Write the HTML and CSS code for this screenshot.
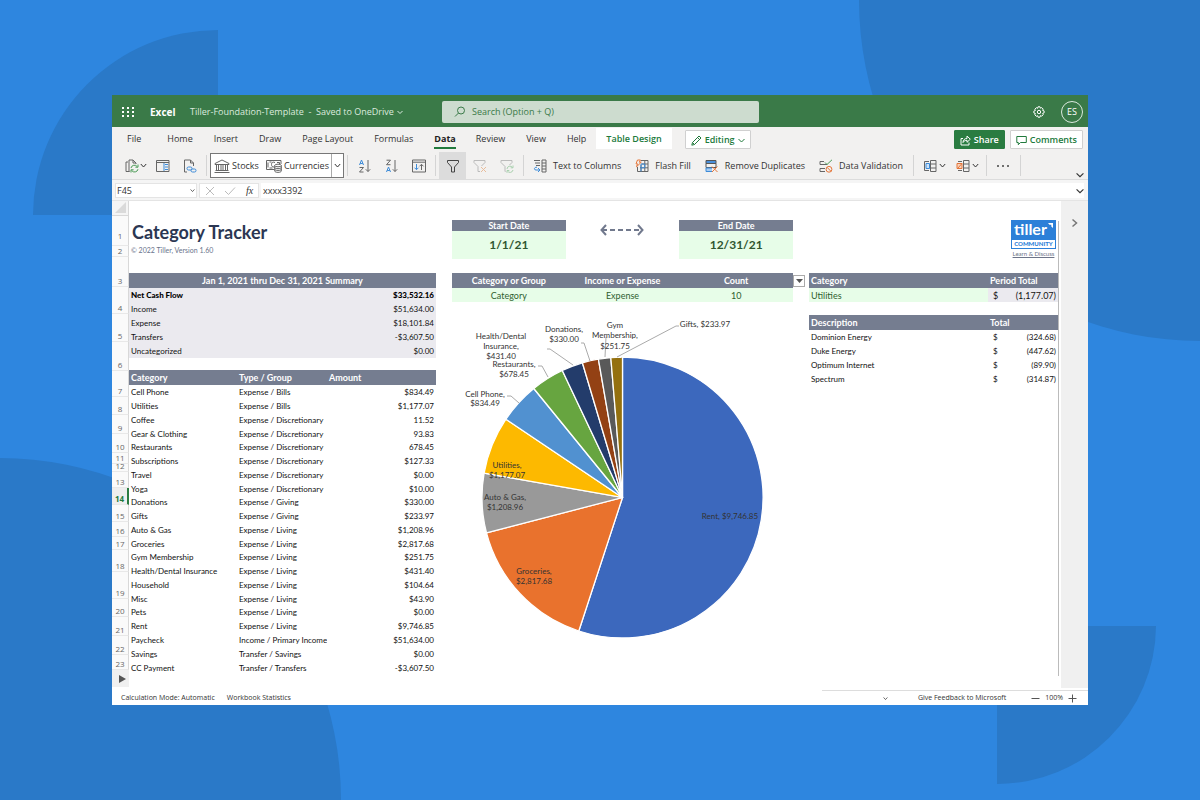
FILE: index.html
```html
<!DOCTYPE html>
<html lang="en">
<head>
<meta charset="utf-8">
<title>Tiller-Foundation-Template - Excel</title>
<link rel="stylesheet" href="styles.css">
</head>
<body>
<svg class="backdrop" viewBox="0 0 1200 800" preserveAspectRatio="xMidYMid slice" aria-hidden="true">
  <path d="M33 215A185 185 0 0 1 218 30V215Z"/>
  <path d="M859 0A341 341 0 0 0 1200 341V0Z"/>
  <path d="M0 458A342 342 0 0 1 341 800H0Z"/>
  <path d="M997 626H1156A159 159 0 0 1 997 784Z"/>
</svg>
<main class="window">
  <header class="titlebar">
    <button class="launcher" aria-label="App launcher"><svg width="12" height="12" viewBox="0 0 12 12" fill="#fff"><path d="M0 1h2v2H0zM5 1h2v2H5zM10 1h2v2h-2zM0 5h2v2H0zM5 5h2v2H5zM10 5h2v2h-2zM0 9h2v2H0zM5 9h2v2H5zM10 9h2v2h-2z"/></svg></button>
    <strong class="app">Excel</strong>
    <button class="doc">Tiller-Foundation-Template&nbsp; -&nbsp; Saved to OneDrive <svg width="6" height="6" viewBox="0 0 6 6"><path class="chev" d="M.5 2L3 4.500 5.500 2"/></svg></button>
    <label class="search"><svg width="12" height="12" viewBox="0 0 12 12" fill="none" stroke="#3a7a48"><circle cx="7" cy="4.500" r="3.500"/><path d="M4.500 7L1 10.500"/></svg><input type="text" placeholder="Search (Option + Q)" aria-label="Search"></label>
    <button class="gear" aria-label="Settings"><svg width="12" height="12" viewBox="0 0 12 12" fill="none" stroke="#fff"><circle cx="6" cy="6" r="1.700"/><path d="M5 .8h2l.4 1.400 1.300-.6 1.500 1.500-.6 1.300 1.500.5v2l-1.500.5.6 1.300-1.500 1.500-1.300-.6L7 11.200H5l-.4-1.500-1.300.6-1.500-1.500.6-1.300L.9 7V5l1.500-.5-.6-1.300 1.500-1.500 1.300.6z"/></svg></button>
    <button class="avatar">ES</button>
  </header>

  <nav class="tabs">
    <button class="tab file">File</button><button class="tab">Home</button><button class="tab">Insert</button><button class="tab">Draw</button><button class="tab">Page Layout</button><button class="tab">Formulas</button><button class="tab active">Data</button><button class="tab">Review</button><button class="tab">View</button><button class="tab">Help</button><button class="tab design">Table Design</button>
    <button class="pill editing"><svg width="11" height="11" viewBox="0 0 11 11" fill="none" stroke="#217a3c"><path d="M.8 10.200l.7-2.700L8 1l2 2-6.500 6.500zM6.500 2.500l2 2M1.500 7.500l2 2"/></svg>Editing<svg width="7" height="7" viewBox="0 0 7 7"><path class="chev" d="M.5 2L3.500 5l3-3"/></svg></button>
    <button class="pill share"><svg width="11" height="11" viewBox="0 0 11 11" fill="none" stroke="#fff"><path d="M3 3.500H1v6.500h8V7.500M3 7.500C3 5 4.500 3.500 7 3.500V1l3.300 3.200L7 7.300V5.300C5 5.300 4 6 3 7.500z"/></svg>Share</button>
    <button class="pill"><svg width="11" height="11" viewBox="0 0 11 11" fill="none" stroke="#217a3c"><path d="M.8 1.500h9.500v6H4.500L2.300 9.700V7.500H.8z"/></svg>Comments</button>
  </nav>

  <div class="toolbar" role="toolbar" aria-label="Data">
    <button class="tool" aria-label="Refresh"><svg width="14" height="14" viewBox="0 0 14 14" fill="none" stroke="#666"><path d="M4.500 12.500H1V3h2M4 13V1h4l3 3v1M8 1v3h3"/><g stroke="#4b9b56"><path d="M6 9a3.500 3.500 0 0 1 6.300-1.300M13 5.500v2.700h-2.600M13 10.200a3.500 3.500 0 0 1-6.300 1.300M6 13.500v-2.700h2.600"/></g></svg><svg width="7" height="7" viewBox="0 0 7 7"><path class="chev" d="M.8 2l2.700 3 2.700-3"/></svg></button>
    <button class="tool" aria-label="Queries"><svg width="14" height="14" viewBox="0 0 14 14" fill="none" stroke="#666"><path d="M.5 1.500h12.500v11H.5zM.5 3.500h12.500"/><path stroke="#3d8bd8" d="M8 4v8M9 5.500h3M9 8h3M9 10.500h3"/></svg></button>
    <button class="tool" aria-label="Links"><svg width="14" height="14" viewBox="0 0 14 14" fill="none" stroke="#666"><path d="M4 13H1.500V1h6l3 3v3M7.500 1v3h3"/><g stroke="#3d8bd8"><rect x="4" y="8" width="5" height="3" rx="1.500"/><rect x="8" y="10" width="5" height="3" rx="1.500"/></g></svg></button>
    <span class="rule"></span>
    <div class="types">
      <button><svg width="16" height="14" viewBox="0 0 16 14" fill="none" stroke="#666"><path d="M1 4.500L8 1l7 3.500v1H1zM2.500 6v5M4.500 6v5M7 6v5M9 6v5M11.500 6v5M13.500 6v5M1.500 11.500h13M.5 13.500h15"/></svg>Stocks</button>
      <button class="money-type"><svg width="16" height="14" viewBox="0 0 16 14" fill="none" stroke="#666"><path d="M8 10.500H.5V1.500H15V5M2 3.500v5M3.500 3h2M3.500 9h3M9 3.500c-2.500-1-3.500 0-3.500 2s1 2.500 2.500 2.500M11 3.500h2.500V5"/><ellipse cx="12" cy="6.500" rx="3.300" ry="1.300"/><path d="M8.700 6.500V12c0 1.800 6.600 1.800 6.600 0V6.500M8.700 8.500c0 1.500 6.600 1.500 6.600 0M8.700 10.300c0 1.500 6.600 1.500 6.600 0"/></svg>Currencies</button>
      <button class="more" aria-label="More data types"><svg width="7" height="7" viewBox="0 0 7 7"><path class="chev" d="M.8 2l2.700 3 2.700-3"/></svg></button>
    </div>
    <span class="rule"></span>
    <button class="tool" aria-label="Sort ascending"><svg width="14" height="14" viewBox="0 0 14 14" fill="none" stroke="#666"><path stroke="#3d8bd8" d="M1.500 6L3.500 1l2 5M2.200 4.500h2.600"/><path d="M1.500 8.500h4L1.500 13h4M10 1v11.500M7.800 10.300L10 12.500l2.200-2.200"/></svg></button>
    <button class="tool" aria-label="Sort descending"><svg width="14" height="14" viewBox="0 0 14 14" fill="none" stroke="#666"><path d="M1.500 1.200h4l-4 4.500h4M10 1v11.500M7.800 10.300L10 12.500l2.200-2.200"/><path stroke="#3d8bd8" d="M1.500 13l2-5 2 5M2.200 11.500h2.600"/></svg></button>
    <button class="tool" aria-label="Custom sort"><svg width="14" height="14" viewBox="0 0 14 14" fill="none" stroke="#666"><path d="M.5 1h13v12H.5zM.5 3.200h13M9.500 11V5.500M7.500 7.300l2-2 2 2"/><path stroke="#3d8bd8" d="M4.500 5v5.500M2.500 8.700l2 2 2-2"/></svg></button>
    <span class="rule"></span>
    <button class="tool on" aria-label="Filter"><svg width="14" height="14" viewBox="0 0 14 14" fill="none" stroke="#444"><path d="M1.500 1.500h11v2L8.500 8v5h-3V8l-4-4.500z"/></svg></button>
    <button class="tool" aria-label="Clear filter"><svg width="14" height="14" viewBox="0 0 14 14" fill="none" stroke="#bbb"><path d="M7 12.500H5V7.500L1 3.500v-2h11v2L8.500 7"/><path stroke="#e8bd9c" d="M8 8l5 5M13 8l-5 5"/></svg></button>
    <button class="tool" aria-label="Reapply filter"><svg width="14" height="14" viewBox="0 0 14 14" fill="none" stroke="#bbb"><path d="M5.500 12.500H5V7.500L1 3.500v-2h11v2L9.500 6"/><path stroke="#a9d0ae" d="M7 10a3 3 0 0 1 5.500-1.500M13 6.500v2.300h-2.300M13 11a3 3 0 0 1-5.500 1M7 13.800v-2.300h2.300"/></svg></button>
    <span class="rule"></span>
    <button class="tool wide first"><svg width="14" height="14" viewBox="0 0 14 14" fill="none" stroke="#666"><path d="M1 1.500h6M2 4h5M3 6.500h4M9 1h4v12H9zM9 4h4M9 7h4M9 10h4"/><path stroke="#3d8bd8" d="M4 8.200C1 8 .5 11 3 11h4M5 9l2 2-2 2"/></svg>Text to Columns</button>
    <button class="tool wide"><svg width="14" height="14" viewBox="0 0 14 14" fill="none" stroke="#666"><path d="M6 1.500h7v11H2.500V8M6.500 5h6.500M5 8.800h8M9.800 1.500v11M6 6v6.500"/><path stroke="#3d8bd8" d="M6 5h3.800v3.800H6zM6 12.500V8.800"/><path stroke="#e5763a" d="M2.500 1h3L4.300 3.200h2L1.500 7.800l1-3H1z"/></svg>Flash Fill</button>
    <button class="tool wide"><svg width="14" height="14" viewBox="0 0 14 14" fill="none" stroke="#555"><path fill="#4a90dc" d="M1 1.500h10v3H1z"/><path d="M1 4.500v4h10v-4"/><path stroke="#3d8bd8" fill="#a9ccf1" d="M7 12.500H1v-3.500h6"/><path stroke="#e5763a" d="M7 7.500l5.500 5.500M12.500 7.500L7 13"/></svg>Remove Duplicates</button>
    <button class="tool wide"><svg width="14" height="14" viewBox="0 0 14 14" fill="none" stroke="#666"><path d="M5 2.500H1v3h5M6 9.500H1v3h5M8 5.500H6"/><path stroke="#4b9b56" d="M6 3.500l2 2L13 .8"/><circle stroke="#e5763a" cx="10" cy="10.300" r="2.900"/><path stroke="#e5763a" d="M8 8.300l4 4"/></svg>Data Validation</button>
    <span class="rule"></span>
    <button class="tool pair" aria-label="Group"><svg width="14" height="14" viewBox="0 0 14 14" fill="none" stroke="#666"><path d="M6 2.500H1.500v9H6M7.500 1.500H13v11H7.500zM7.500 5H13M7.500 9H13"/><path d="M3 4.500h3.500v5H3z" stroke="#3d8bd8" fill="#cfe3f7"/></svg><svg width="7" height="7" viewBox="0 0 7 7"><path class="chev" d="M.8 2l2.700 3 2.700-3"/></svg></button>
    <button class="tool pair" aria-label="Ungroup"><svg width="14" height="14" viewBox="0 0 14 14" fill="none" stroke="#666"><path d="M6 2.500H2M2 11.500h4M7.500 1.500H13v11H7.500zM7.500 5H13M7.500 9H13"/><path stroke="#e5763a" fill="#f9d3bd" d="M1 4.500h5v5H1zM1.500 9.500l4.500-5"/></svg><svg width="7" height="7" viewBox="0 0 7 7"><path class="chev" d="M.8 2l2.700 3 2.700-3"/></svg></button>
    <span class="rule"></span>
    <button class="tool" aria-label="More"><svg width="14" height="14" viewBox="0 0 14 14" fill="#444"><circle cx="2" cy="7" r="1"/><circle cx="7" cy="7" r="1"/><circle cx="12" cy="7" r="1"/></svg></button>
    <span class="rule"></span>
    <button class="collapse" aria-label="Collapse ribbon"><svg width="8" height="8" viewBox="0 0 7 7"><path class="chev" d="M.5 2l3 3 3-3"/></svg></button>
  </div>

  <div class="formula">
    <button class="cellname">F45<svg width="5" height="5" viewBox="0 0 7 7"><path class="chev" d="M.8 2l2.700 3 2.700-3"/></svg></button>
    <div class="fx"><svg width="10" height="10" viewBox="0 0 10 10" stroke="#bbb"><path d="M1 1l8 8M9 1L1 9"/></svg><svg width="12" height="10" viewBox="0 0 12 10" fill="none" stroke="#bbb"><path d="M1 5l3.500 3.500L11 1.500"/></svg><i>fx</i></div>
    <input class="value" type="text" value="xxxx3392" aria-label="Formula bar">
    <button class="expand" aria-label="Expand"><svg width="8" height="8" viewBox="0 0 7 7"><path class="chev" d="M.5 2l3 3 3-3"/></svg></button>
  </div>

  <div class="workspace">
    <div class="gutter">
      <div class="corner"><svg width="11" height="11" viewBox="0 0 11 11"><path fill="#dadada" d="M11 0v11H0z"/></svg></div>
      <span class="tall">1</span><span>2</span><span>3</span><span>4</span><span>5</span><span>6</span><span>7</span><span>8</span><span>9</span><span>10</span><span>11</span><span>12</span><span>13</span><span class="current">14</span><span>15</span><span>16</span><span>17</span><span>18</span><span>19</span><span>20</span><span>21</span><span>22</span><span>23</span>
      <button class="play" aria-label="Next sheet"><svg width="7" height="8" viewBox="0 0 7 8"><path fill="#555" d="M0 0l7 4-7 4z"/></svg></button>
    </div>

    <div class="sheet">
      <section class="col left">
        <div class="top">
          <h1>Category Tracker</h1>
          <p class="copy">© 2022 Tiller, Version 1.60</p>
        </div>
        <table class="summary">
          <thead><tr><th colspan="2">Jan 1, 2021 thru Dec 31, 2021 Summary</th></tr></thead>
          <tbody>
            <tr class="strong"><td>Net Cash Flow</td><td>$33,532.16</td></tr>
            <tr><td>Income</td><td>$51,634.00</td></tr>
            <tr><td>Expense</td><td>$18,101.84</td></tr>
            <tr><td>Transfers</td><td>-$3,607.50</td></tr>
            <tr><td>Uncategorized</td><td>$0.00</td></tr>
          </tbody>
        </table>
        <table class="ledger">
          <thead><tr><th>Category</th><th>Type / Group</th><th>Amount</th></tr></thead>
          <tbody>
            <tr><td>Cell Phone</td><td>Expense / Bills</td><td>$834.49</td></tr>
            <tr><td>Utilities</td><td>Expense / Bills</td><td>$1,177.07</td></tr>
            <tr><td>Coffee</td><td>Expense / Discretionary</td><td>11.52</td></tr>
            <tr><td>Gear &amp; Clothing</td><td>Expense / Discretionary</td><td>93.83</td></tr>
            <tr><td>Restaurants</td><td>Expense / Discretionary</td><td>678.45</td></tr>
            <tr><td>Subscriptions</td><td>Expense / Discretionary</td><td>$127.33</td></tr>
            <tr><td>Travel</td><td>Expense / Discretionary</td><td>$0.00</td></tr>
            <tr><td>Yoga</td><td>Expense / Discretionary</td><td>$10.00</td></tr>
            <tr><td>Donations</td><td>Expense / Giving</td><td>$330.00</td></tr>
            <tr><td>Gifts</td><td>Expense / Giving</td><td>$233.97</td></tr>
            <tr><td>Auto &amp; Gas</td><td>Expense / Living</td><td>$1,208.96</td></tr>
            <tr><td>Groceries</td><td>Expense / Living</td><td>$2,817.68</td></tr>
            <tr><td>Gym Membership</td><td>Expense / Living</td><td>$251.75</td></tr>
            <tr><td>Health/Dental Insurance</td><td>Expense / Living</td><td>$431.40</td></tr>
            <tr><td>Household</td><td>Expense / Living</td><td>$104.64</td></tr>
            <tr><td>Misc</td><td>Expense / Living</td><td>$43.90</td></tr>
            <tr><td>Pets</td><td>Expense / Living</td><td>$0.00</td></tr>
            <tr><td>Rent</td><td>Expense / Living</td><td>$9,746.85</td></tr>
            <tr><td>Paycheck</td><td>Income / Primary Income</td><td>$51,634.00</td></tr>
            <tr><td>Savings</td><td>Transfer / Savings</td><td>$0.00</td></tr>
            <tr><td>CC Payment</td><td>Transfer / Transfers</td><td>-$3,607.50</td></tr>
          </tbody>
        </table>
      </section>

      <section class="col mid">
        <div class="top dates">
          <div class="date"><h2>Start Date</h2><p>1/1/21</p></div>
          <svg class="arrow" width="44" height="12" viewBox="0 0 44 12" fill="none" stroke="#71798d" stroke-width="2"><path d="M6 1L1.500 6 6 11M38 1l4.500 5L38 11"/><path d="M2 6h40" stroke-dasharray="5 3"/></svg>
          <div class="date"><h2>End Date</h2><p>12/31/21</p></div>
        </div>
        <div class="picker">
          <table>
            <thead><tr><th>Category or Group</th><th>Income or Expense</th><th>Count</th></tr></thead>
            <tbody><tr><td>Category</td><td>Expense</td><td>10</td></tr></tbody>
          </table>
          <button class="drop" aria-label="Choose count"><svg width="7" height="4" viewBox="0 0 7 4"><path fill="#555" d="M0 0h7L3.500 4z"/></svg></button>
        </div>
        <svg class="chart" viewBox="452 302 341 350" role="img" aria-label="Spending by category">
          <g stroke="#fff" stroke-width="1.300" stroke-linejoin="round">
            <path fill="#3c68bd" d="M622.500 497.500V357A140.500 140.500 0 1 1 578.800 631z"/>
            <path fill="#e9722d" d="M622.500 497.500L578.800 631A140.500 140.500 0 0 1 486.500 532.900z"/>
            <path fill="#999" d="M622.500 497.500L486.500 532.900A140.500 140.500 0 0 1 484.100 473.200z"/>
            <path fill="#fdb900" d="M622.500 497.500L484.100 473.200A140.500 140.500 0 0 1 505.900 419.200z"/>
            <path fill="#5191d0" d="M622.500 497.500L505.900 419.200A140.500 140.500 0 0 1 533.800 388.500z"/>
            <path fill="#67a540" d="M622.500 497.500L533.800 388.500A140.500 140.500 0 0 1 562.300 370.500z"/>
            <path fill="#233c6b" d="M622.500 497.500L562.300 370.500A140.500 140.500 0 0 1 582.400 362.800z"/>
            <path fill="#934114" d="M622.500 497.500L582.400 362.800A140.500 140.500 0 0 1 598.400 359.100z"/>
            <path fill="#595959" d="M622.500 497.500L598.400 359.100A140.500 140.500 0 0 1 610.800 357.500z"/>
            <path fill="#94700f" d="M622.500 497.500L610.800 357.500A140.500 140.500 0 0 1 622.500 357z"/>
          </g>
          <path class="leader" d="M507 396h4l8 7M538 366h4l6 11M547 349h3l23 16M581 343h3l6 18M606 337l-1 20M679 326h-3l-59 31"/>
          <g text-anchor="middle">
            <text x="501" y="339">Health/Dental</text><text x="501" y="349">Insurance,</text><text x="501" y="359">$431.40</text>
            <text x="514" y="367">Restaurants,</text><text x="514" y="377">$678.45</text>
            <text x="485" y="397">Cell Phone,</text><text x="485" y="406">$834.49</text>
            <text x="564" y="332">Donations,</text><text x="564" y="342">$330.00</text>
            <text x="615" y="328">Gym</text><text x="615" y="338">Membership,</text><text x="615" y="349">$251.75</text>
            <text x="705" y="327">Gifts, $233.97</text>
            <text x="507" y="468">Utilities,</text><text x="507" y="478">$1,177.07</text>
            <text x="505" y="500">Auto &amp; Gas,</text><text x="505" y="510">$1,208.96</text>
            <text x="534" y="574">Groceries,</text><text x="534" y="584">$2,817.68</text>
            <text x="730" y="519">Rent, $9,746.85</text>
          </g>
        </svg>
      </section>

      <section class="col right">
        <div class="top brandbox">
          <a class="brand" href="#"><b class="name">tiller<svg width="5" height="8" viewBox="0 0 5 8"><path fill="#fff" d="M0 0h5v5L3.300 3.500V1.700H1.500z"/></svg></b><b class="community">COMMUNITY</b><span>Learn &amp; Discuss</span></a>
        </div>
        <table class="money pick">
          <colgroup><col class="what"><col class="sign"><col></colgroup>
          <thead><tr><th>Category</th><th colspan="2">Period Total</th></tr></thead>
          <tbody><tr><td>Utilities</td><td>$</td><td>(1,177.07)</td></tr></tbody>
        </table>
        <table class="money">
          <colgroup><col class="what"><col class="sign"><col></colgroup>
          <thead><tr><th>Description</th><th colspan="2">Total</th></tr></thead>
          <tbody>
            <tr><td>Dominion Energy</td><td>$</td><td>(324.68)</td></tr>
            <tr><td>Duke Energy</td><td>$</td><td>(447.62)</td></tr>
            <tr><td>Optimum Internet</td><td>$</td><td>(89.90)</td></tr>
            <tr><td>Spectrum</td><td>$</td><td>(314.87)</td></tr>
          </tbody>
        </table>
      </section>
      <div class="edge"></div>
    </div>
    <aside class="pane"><button aria-label="Open pane"><svg width="7" height="10" viewBox="0 0 7 10" fill="none" stroke="#777" stroke-width="1.500"><path d="M1.500 1.500L5.500 5l-4 3.500"/></svg></button></aside>
  </div>

  <footer class="status">
    <span>Calculation Mode: Automatic</span><span>Workbook Statistics</span>
    <div class="tray">
      <button aria-label="Status options"><svg width="5" height="5" viewBox="0 0 7 7"><path class="chev" d="M.8 2l2.700 3 2.700-3"/></svg></button>
      <button class="feedback">Give Feedback to Microsoft</button>
      <button aria-label="Zoom out"><svg width="9" height="9" viewBox="0 0 9 9" stroke="#555"><path d="M.5 4.500h8"/></svg></button>
      <span class="zoom">100%</span>
      <button aria-label="Zoom in"><svg width="9" height="9" viewBox="0 0 9 9" stroke="#555"><path d="M.5 4.500h8M4.500.5v8"/></svg></button>
    </div>
  </footer>
</main>
</body>
</html>
```

FILE: styles.css
```css
* { box-sizing: border-box; }
body {
  margin: 0;
  min-height: 100vh;
  padding: 95px 112px;
  display: flex;
  background: #2e86df;
  font: 9px/12px "Open Sans", "Noto Sans", sans-serif;
  color: #333;
}
h1, h2, p { margin: 0; }
button { border: 0; padding: 0; background: none; font: inherit; color: inherit; display: flex; align-items: center; white-space: nowrap; }
input { border: 0; padding: 0; background: none; font: inherit; color: inherit; outline: 0; min-width: 0; }
svg { flex: none; }
.chev { fill: none; stroke: currentColor; }
.backdrop { position: fixed; inset: 0; width: 100%; height: 100%; fill: #2a79c8; }
.window { position: relative; flex: 1; min-width: 0; display: flex; flex-direction: column; background: #fff; }

.titlebar { height: 32px; display: flex; align-items: center; padding: 1px 5px 0 10px; background: #3a7a48; color: #fff; }
.launcher { width: 28px; }
.app { width: 40px; font-size: 10px; }
.doc { gap: 3px; width: 252px; color: #dceadf; }
.search { flex: 0 1 317px; height: 22px; display: flex; align-items: center; gap: 6px; padding: 1px 12px 0; border-radius: 2px; background: #cddccf; color: #3a7a48; }
.search input { flex: 1; }
.search input::placeholder { color: #3a7a48; opacity: 1; }
.gear { margin-left: auto; }
.avatar { width: 22px; height: 22px; margin-left: 16px; justify-content: center; border: 1px solid #dceadf; border-radius: 50%; font-size: 9px; }

.tabs { height: 25px; display: flex; align-items: flex-start; padding: 1px 5px 0 15px; background: #f2f1f0; }
.tab { height: 21px; padding-top: 2px; margin-right: 21px; border-bottom: 2px solid transparent; }
.tab.file { margin-right: 26px; }
.tab.active { margin-right: 20px; font-weight: 700; color: #222; border-color: #217a3c; }
.tab.design { margin-left: -11px; margin-right: 13px; padding: 0 10px; background: #fff; color: #217a3c; font-weight: 600; border: 0; }
.pill { height: 19px; margin-top: 2px; gap: 3px; padding: 1px 5px 0; border: 1px solid #d0d0d0; border-radius: 1px; background: #fff; color: #217a3c; font-weight: 600; }
.share { margin-left: auto; margin-right: 5px; background: #2a7c41; border-color: #2a7c41; color: #fff; }

.toolbar { height: 28px; display: flex; padding: 0 4px 0 10px; background: #f2f1f0; border-bottom: 1px solid #dcdcdc; }
.tool { width: 27px; justify-content: center; gap: 1px; }
.tool.on { background: #dcdcdc; }
.tool.wide { width: auto; gap: 6px; padding: 0 7px; }
.tool.first { padding-left: 6px; }
.tool.pair { width: 33px; gap: 2px; padding-left: 2px; }
.rule { width: 1px; margin: 3px; background: #d4d4d4; }
.types { display: flex; margin: 1px 0; background: #fff; border: 1px solid #777; width: 134px; }
.types button { gap: 2px; padding-left: 3px; }
.types .money-type { padding-left: 7px; }
.types .more { margin-left: auto; width: 12px; padding: 0; justify-content: center; border-left: 1px solid #aaa; }
.collapse { margin-left: auto; align-items: flex-end; }

.formula { height: 21px; display: flex; gap: 2px; padding: 3px 4px 2px 3px; background: #f5f5f5; border-bottom: 1px solid #e4e4e4; }
.cellname { width: 82px; justify-content: space-between; padding: 0 1px; background: #fff; border: 1px solid #e4e4e4; }
.fx { width: 60px; display: flex; align-items: center; justify-content: space-around; background: #fff; border: 1px solid #e4e4e4; font: italic 10px "Liberation Serif", serif; }
.value { flex: 1; padding-left: 2px; background: #fff; }
.expand { background: #fff; margin-left: -2px; }

.workspace { flex: 1; display: flex; background: #fff; }
.gutter { width: 17px; display: grid; align-content: start; grid-template-rows: 15px 30px 11px 30px 27px 28px 29px 26px 18px 19px 19px 11px 8px 16px 17px 17px 15px 13px 22px 27px 18px 19px 19px 15px 17px; font-size: 8px; line-height: 10px; color: #666; }
.gutter span { display: flex; align-items: flex-end; justify-content: center; background: #fafafa; border-right: 1px solid #d8d8d8; border-bottom: 1px solid #e8e8e8; overflow: hidden; }
.gutter .tall { padding-bottom: 4px; }
.gutter .current { color: #217a3c; background: #eee; border-right: 2px solid #2a7c41; font-weight: 700; }
.corner { display: flex; align-items: flex-end; justify-content: flex-end; padding: 2px; background: #f5f5f5; border-right: 1px solid #d8d8d8; border-bottom: 1px solid #d8d8d8; }
.play { justify-content: center; padding-left: 3px; background: #f0f0f0; }

.sheet { position: relative; flex: 1; display: grid; grid-template-columns: 307fr 341fr 249fr; column-gap: 16px; align-items: start; padding-right: 3px; font-family: Lato, "Open Sans", sans-serif; color: #111; }
.edge { position: absolute; top: 20px; right: 2px; bottom: 12px; width: 1px; background: #bbb; }
.top { height: 72px; padding-top: 19px; }
table { width: 100%; border-collapse: collapse; table-layout: fixed; font-size: 8px; line-height: 13px; }
th, td { padding: 0 2px; text-align: left; white-space: nowrap; overflow: hidden; }
th { height: 15px; background: #757d90; color: #fff; font-size: 9px; }
td { height: 14px; }
td:last-child { text-align: right; }
h1 { padding-left: 3px; font-size: 18px; line-height: 24px; color: #2b3753; }
.copy { padding-left: 2px; font-size: 7px; line-height: 12px; color: #69738b; }
.summary th { text-align: center; }
.summary td { background: #ebeaef; }
.strong td { font-weight: 900; color: #000; }
.ledger { height: 304px; margin-top: 12px; }
.ledger td { height: 13px; padding-top: 1px; line-height: 12px; }
.ledger th:nth-child(1) { width: 108px; }
.ledger th:nth-child(2) { width: 90px; }
.dates { display: grid; grid-template-columns: 1fr 1fr 1fr; align-items: start; }
.date { text-align: center; font-weight: 700; }
.date h2 { background: #757d90; color: #fff; font-size: 9px; line-height: 11px; }
.date p { background: #e7fde8; color: #2f5630; font-size: 12px; line-height: 28px; }
.arrow { justify-self: center; margin-top: 4px; }
.picker { position: relative; }
.picker th, .picker td, .picker td:last-child { text-align: center; }
.picker td { background: #e7fde8; color: #2f6030; font-size: 9px; }
.drop { position: absolute; left: 100%; top: 2px; width: 12px; height: 12px; justify-content: center; border: 1px solid #aaa; background: #fff; }
.chart { display: block; width: 100%; overflow: visible; font-size: 8px; fill: #333; }
.leader { fill: none; stroke: #aaa; }
.brandbox { display: flex; justify-content: flex-end; padding-right: 2px; }
.brand { display: flex; flex-direction: column; width: 45px; text-align: center; color: #6d7488; font-size: 6px; line-height: 9px; white-space: nowrap; text-decoration: none; }
.brand span { text-decoration: underline; }
.name { display: flex; justify-content: center; gap: 1px; padding: 1px 0 2px; background: #2c80d8; color: #fff; font-size: 16px; line-height: 16px; }
.name svg { margin-top: 2px; }
.community { border: 1px solid #2c80d8; background: #fff; color: #2c80d8; font-size: 6px; font-weight: 900; line-height: 8px; }
.what { width: 179px; }
.sign { width: 16px; }
.money td:nth-child(2) { padding-left: 5px; }
.pick { margin-bottom: 13px; }
.pick td { background: #ebeaef; font-size: 9px; }
.pick td:first-child { background: #e7fde8; color: #2f6030; }
.pane { width: 27px; padding: 17px 10px; background: #f0f0f0; }

.status { height: 17px; display: flex; align-items: center; gap: 12px; padding: 2px 0 0 9px; font-size: 7px; }
.tray { align-self: stretch; flex: 0 1 266px; margin-left: auto; display: flex; align-items: center; gap: 5px; padding: 0 11px 0 61px; border-top: 1px solid #ddd; }
.feedback { margin: 0 20px 0 auto; }
```
